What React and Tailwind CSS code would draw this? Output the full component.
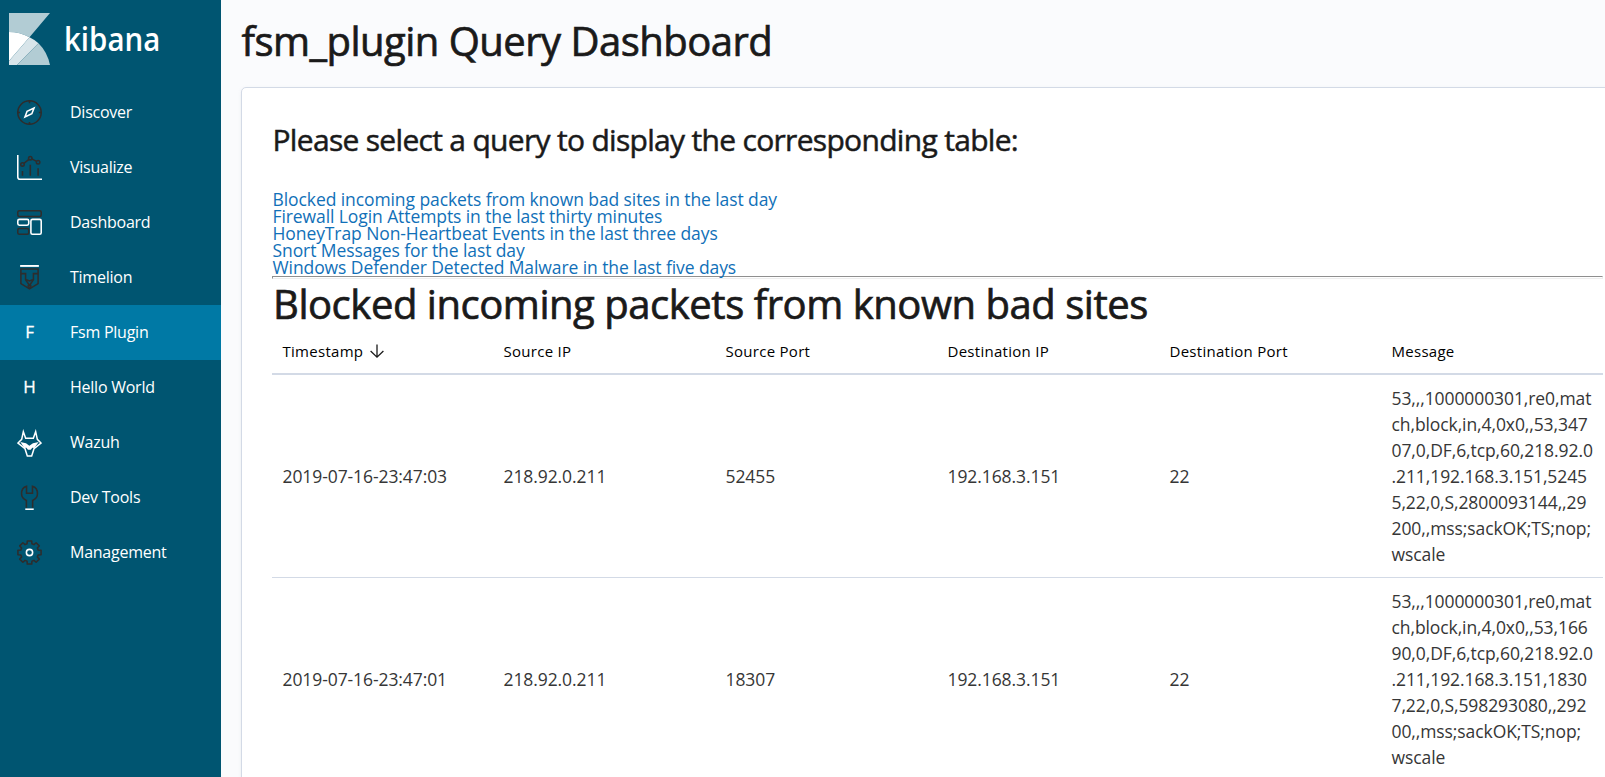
import React from "react";

const DARK = "#2d2d2d";

const gearPoints = (() => {
  const pts = [];
  for (let i = 0; i < 8; i++) {
    const base = (i * Math.PI) / 4;
    [[-0.27, 11.6], [-0.19, 15.1], [0.19, 15.1], [0.27, 11.6]].forEach(([a, r]) => {
      pts.push(`${(16 + r * Math.sin(base + a)).toFixed(2)},${(16 - r * Math.cos(base + a)).toFixed(2)}`);
    });
  }
  return pts.join(" ");
})();

function Icon({ children }) {
  return (
    <svg className="h-[25px] w-[25px]" viewBox="0 0 32 32" fill="none" strokeWidth="2">
      {children}
    </svg>
  );
}

const icons = {
  discover: (
    <Icon>
      <circle cx="16" cy="16" r="15" stroke={DARK} />
      <path d="M16 1v3M16 28v3M1 16h3M28 16h3" stroke={DARK} />
      <path d="M10.200 21.800l2.700-7.300 8.900-4.300-2.800 7.300z" stroke="#fff" />
    </Icon>
  ),
  visualize: (
    <Icon>
      <path d="M1 0v28a3 3 0 0 0 3 3h28" stroke="#fff" />
      <path d="M7 20.5v6M17 12.5v14M27 17v9.5M8.900 10.600l6.300-5M19 5l6 3.200" stroke={DARK} />
      <circle cx="7" cy="12" r="2.200" stroke={DARK} />
      <circle cx="17" cy="4" r="2.200" stroke={DARK} />
      <circle cx="27" cy="9.200" r="2.200" stroke={DARK} />
    </Icon>
  ),
  dashboard: (
    <Icon>
      <rect x="1" y="1" width="30" height="7.400" rx="2" stroke={DARK} />
      <rect x="1" y="23.600" width="14" height="7.400" rx="2" stroke={DARK} />
      <rect x="1" y="12" width="14" height="7.400" rx="2" stroke="#fff" />
      <rect x="17.800" y="12" width="13.200" height="19" rx="2" stroke="#fff" />
    </Icon>
  ),
  timelion: (
    <Icon>
      <path d="M4 1.200h24" stroke="#fff" strokeWidth="2.400" />
      <path d="M5 5.200h22v18.600L16 30.600 5 23.800z" stroke={DARK} />
      <path d="M5 11h6v8l5 7 5-7v-8h6M12 19l4 1.500L20 19" stroke={DARK} />
      <circle cx="16" cy="27" r="1.800" stroke={DARK} />
    </Icon>
  ),
  wazuh: (
    <svg className="h-[28px] w-[25px]" viewBox="0 0 75 84" fill="none" stroke="#fff" strokeWidth="4.500">
      <path d="M19 8l7 20h23l7-20 5 23 11 11-21 17-7 22H31l-7-22L3 42l11-11z" />
      <path d="M10 39l17 4 10 7 11-7 17-4-13 18-6-1-5 6h-8l-5-6-6 1z" fill="#fff" stroke="none" />
    </svg>
  ),
  tools: (
    <Icon>
      <path
        d="M12 29V19.700C8.100 18.300 5.800 15 5.800 11c0-4.700 2.200-8.200 6.400-9.400V10.600h7.600V1.600c4.200 1.200 6.400 4.700 6.400 9.400 0 4-2.300 7.300-6.200 8.700V29"
        stroke={DARK}
      />
      <path d="M10.600 31h10.800" stroke="#fff" />
    </Icon>
  ),
  gear: (
    <Icon>
      <polygon points={gearPoints} stroke={DARK} strokeLinejoin="round" />
      <circle cx="16" cy="16" r="4" stroke="#fff" />
    </Icon>
  ),
};

const navItems = [
  { label: "Discover", icon: icons.discover },
  { label: "Visualize", icon: icons.visualize },
  { label: "Dashboard", icon: icons.dashboard },
  { label: "Timelion", icon: icons.timelion },
  { label: "Fsm Plugin", letter: "F", active: true },
  { label: "Hello World", letter: "H" },
  { label: "Wazuh", icon: icons.wazuh },
  { label: "Dev Tools", icon: icons.tools },
  { label: "Management", icon: icons.gear },
];

const queries = [
  "Blocked incoming packets from known bad sites in the last day",
  "Firewall Login Attempts in the last thirty minutes",
  "HoneyTrap Non-Heartbeat Events in the last three days",
  "Snort Messages for the last day",
  "Windows Defender Detected Malware in the last five days",
];

const columns = ["Timestamp", "Source IP", "Source Port", "Destination IP", "Destination Port", "Message"];

const rows = [
  {
    cells: ["2019-07-16-23:47:03", "218.92.0.211", "52455", "192.168.3.151", "22"],
    message: [
      "53,,,1000000301,re0,mat",
      "ch,block,in,4,0x0,,53,347",
      "07,0,DF,6,tcp,60,218.92.0",
      ".211,192.168.3.151,5245",
      "5,22,0,S,2800093144,,29",
      "200,,mss;sackOK;TS;nop;",
      "wscale",
    ],
  },
  {
    cells: ["2019-07-16-23:47:01", "218.92.0.211", "18307", "192.168.3.151", "22"],
    message: [
      "53,,,1000000301,re0,mat",
      "ch,block,in,4,0x0,,53,166",
      "90,0,DF,6,tcp,60,218.92.0",
      ".211,192.168.3.151,1830",
      "7,22,0,S,598293080,,292",
      "00,,mss;sackOK;TS;nop;",
      "wscale",
    ],
  },
];

function Sidebar() {
  return (
    <aside className="flex w-[221px] shrink-0 flex-col bg-[#005571] text-white">
      <div className="flex h-[85px] items-start pt-[13px] pl-[9px]">
        <svg className="h-[52px] w-[41px]" viewBox="0 0 41 52">
          <path d="M0 0H41L20.500 24.300A42 42 0 0 0 0 19z" fill="#b2ccd4" />
          <path d="M0 19A42 42 0 0 1 20.500 24.300L0 48z" fill="#fff" />
          <path d="M20.500 24.300A42 42 0 0 1 29.500 30.200L8 52H0V48z" fill="#d8e5ea" />
          <path d="M29.500 30.200A42 42 0 0 1 41 52H8z" fill="#b2ccd4" />
        </svg>
        <span className="mt-px ml-[14px] origin-left scale-x-[0.92] text-[32px] leading-[50px] font-semibold">kibana</span>
      </div>
      <nav className="flex flex-col">
        {navItems.map((item) => (
          <a
            key={item.label}
            className={`flex h-[55px] items-center pl-[17px] text-[16px] leading-6 tracking-[-0.015em] ${item.active ? "bg-[#0079a5]" : ""}`}
          >
            <span className="flex w-[25px] justify-center">
              {item.icon || <span className="pb-[2px] text-[17px] [-webkit-text-stroke:0.3px_#fff]">{item.letter}</span>}
            </span>
            <span className="ml-[28px] pb-[2px]">{item.label}</span>
          </a>
        ))}
      </nav>
    </aside>
  );
}

function ResultTable() {
  return (
    <div className="w-[1331px]">
      <div className="grid h-[47px] grid-cols-[221px_repeat(5,222px)] items-center border-b-2 border-[#d3dae6] pt-[1px] text-[15px] font-medium tracking-[0.28px] text-black">
        {columns.map((name, i) => (
          <div key={name} className="flex items-center pr-[9px] pl-[10.5px] leading-5">
            {name}
            {i === 0 && (
              <svg className="ml-[7px] h-[15px] w-[14px]" viewBox="0 0 14 15" fill="none" stroke="#1a1a1a" strokeWidth="1.300">
                <path d="M7 0.500V13M0.600 7L7 13.200L13.400 7" />
              </svg>
            )}
          </div>
        ))}
      </div>
      {rows.map((row) => (
        <div
          key={row.cells[0]}
          className="grid h-[203px] grid-cols-[221px_repeat(5,222px)] items-center border-b border-[#d3dae6] pb-px text-[17.5px] leading-[26px] tracking-[-0.005em] text-[#363636]"
        >
          {row.cells.map((cell, i) => (
            <div key={i} className="pr-[9px] pl-[10.5px]">{cell}</div>
          ))}
          <div className="pr-[9px] pl-[10.5px] whitespace-nowrap">
            {row.message.map((line) => (
              <div key={line}>{line}</div>
            ))}
          </div>
        </div>
      ))}
    </div>
  );
}

export default function App() {
  return (
    <div className="flex h-[777px] w-full overflow-hidden bg-[#fafbfd] font-['Open_Sans',sans-serif]">
      <Sidebar />
      <main className="flex min-w-0 grow flex-col overflow-hidden pl-[20px]">
        <h1 className="h-[87px] shrink-0 pt-[15px] pl-[0.5px] text-[40px] leading-[51px] font-medium tracking-[-0.52px] text-[#1a1a1a] [-webkit-text-stroke:0.7px_#1a1a1a]">
          fsm_plugin Query Dashboard
        </h1>
        <section className="w-[1394px] shrink-0 rounded-[5px] border border-[#d3dae6] bg-white px-[30px] pt-[32px] pb-[32px] shadow-[0_2px_2px_-1px_rgba(152,162,179,0.3),0_1px_5px_-2px_rgba(152,162,179,0.3)]">
          <h2 className="pt-px pl-[0.5px] text-[30px] leading-[38px] font-medium tracking-[-0.69px] text-[#1a1a1a] [-webkit-text-stroke:0.5px_#1a1a1a]">
            Please select a query to display the corresponding table:
          </h2>
          <div className="mt-[32px] flex flex-col pl-[0.5px] text-[17.5px] leading-[17px] tracking-[-0.005em] text-[#1170b8]">
            {queries.map((q) => (
              <a key={q}>{q}</a>
            ))}
          </div>
          <hr className="h-[3px] w-[1331px] border border-t-[#8f8f8f] border-r-[#eeeeee] border-b-[#eeeeee] border-l-[#8f8f8f]" />
          <h1 className="pl-px text-[40px] leading-[49px] font-medium tracking-[-0.46px] text-[#1a1a1a] [-webkit-text-stroke:0.7px_#1a1a1a]">
            Blocked incoming packets from known bad sites
          </h1>
          <ResultTable />
        </section>
      </main>
    </div>
  );
}
